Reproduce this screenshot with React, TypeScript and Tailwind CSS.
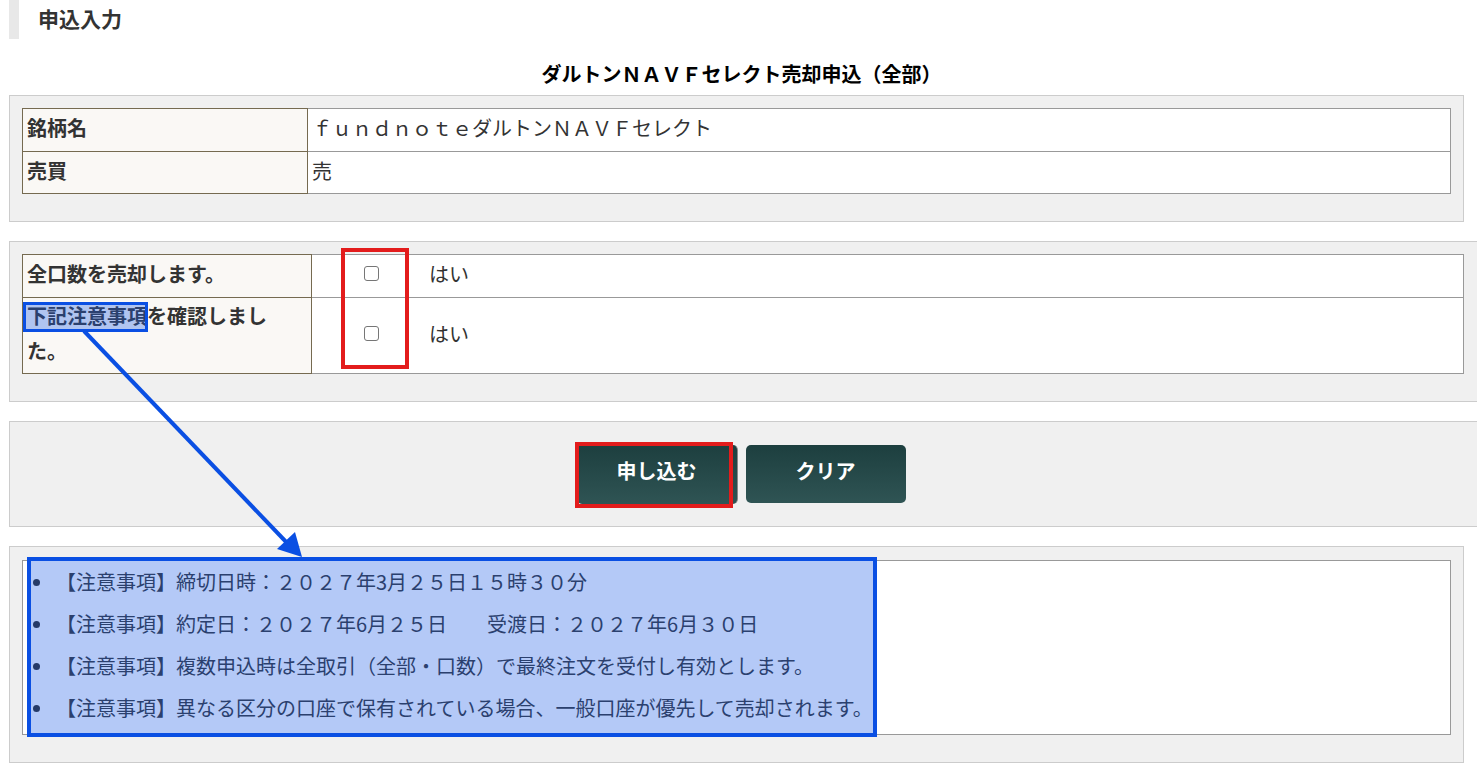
import React from 'react';

const notes = [
  '【注意事項】締切日時：２０２７年3月２５日１５時３０分',
  '【注意事項】約定日：２０２７年6月２５日　　受渡日：２０２７年6月３０日',
  '【注意事項】複数申込時は全取引（全部・口数）で最終注文を受付し有効とします。',
  '【注意事項】異なる区分の口座で保有されている場合、一般口座が優先して売却されます。',
];

function Checkbox() {
  return (
    <input
      type="checkbox"
      className="appearance-none w-[15px] h-[15px] rounded-[3px] border-[1.5px] border-[#767676] bg-white"
    />
  );
}

export default function App() {
  return (
    <div className="relative w-[1477px] h-[778px] overflow-hidden bg-white text-[#333] font-['Noto_Sans_CJK_JP',sans-serif] text-[20px]">
      {/* heading */}
      <div className="h-[39px] flex items-center">
        <div className="ml-[9px] w-[10px] h-[39px] bg-[#e8e8e8]" />
        <h1 className="ml-[19px] mb-[3px] text-[21px] font-bold leading-none text-[#333]">申込入力</h1>
      </div>

      <h2 className="mt-[17px] h-[39px] pl-[6px] text-center font-bold text-black leading-[35px]">
        ダルトンＮＡＶＦセレクト売却申込（全部）
      </h2>

      {/* fund */}
      <div className="ml-[9px] mr-[13px] border border-[#ccc] bg-[#f0f0f0] pt-[12px] pb-[27px] px-[12px]">
        <table className="w-full border-collapse bg-white">
          <tbody>
            <tr className="h-[43px]">
              <th className="w-[285px] border border-[#756a50] bg-[#faf8f5] px-[4px] pb-[5px] text-left font-bold leading-[35px]">銘柄名</th>
              <td className="border border-[#999] px-[4px] pb-[5px] leading-[35px]">ｆｕｎｄｎｏｔｅダルトンＮＡＶＦセレクト</td>
            </tr>
            <tr className="h-[42px]">
              <th className="border border-[#756a50] bg-[#faf8f5] px-[4px] pb-[5px] text-left font-bold leading-[35px]">売買</th>
              <td className="border border-[#999] px-[4px] pb-[5px] leading-[35px]">売</td>
            </tr>
          </tbody>
        </table>
      </div>

      {/* confirm */}
      <div className="mt-[19px] ml-[9px] mr-[-12px] border border-[#ccc] bg-[#f0f0f0] pt-[12px] pb-[27px] pl-[12px] pr-[24px]">
        <table className="w-full border-collapse bg-white">
          <tbody>
            <tr className="h-[43px]">
              <th className="w-[289px] border border-[#756a50] bg-[#faf8f5] px-[4px] pb-[5px] text-left font-bold leading-[35px]">全口数を売却します。</th>
              <td className="border border-[#999] px-0 pb-[5px]">
                <div className="flex items-center pl-[52px]">
                  <Checkbox />
                  <span className="ml-[50px] leading-[35px]">はい</span>
                </div>
              </td>
            </tr>
            <tr className="h-[76px]">
              <th className="border border-[#756a50] bg-[#faf8f5] px-[4px] pt-0 pb-[5px] text-left font-bold leading-[35px]">
                下記注意事項を確認しまし<br />た。
              </th>
              <td className="border border-[#999] px-0 pb-[5px]">
                <div className="flex items-center pl-[52px]">
                  <Checkbox />
                  <span className="ml-[50px] leading-[35px]">はい</span>
                </div>
              </td>
            </tr>
          </tbody>
        </table>
      </div>

      {/* buttons */}
      <div className="mt-[19px] ml-[9px] mr-[-12px] h-[106px] border border-[#ccc] bg-[#f0f0f0] flex items-center justify-center gap-[8px] pr-[16px]">
        <button className="w-[161px] h-[59px] pb-[6px] rounded-[5px] bg-gradient-to-b from-[#1d3f3f] to-[#2f5454] text-white font-bold border-r border-[#888]">
          申し込む
        </button>
        <button className="w-[160px] h-[58px] pb-[6px] rounded-[5px] bg-gradient-to-b from-[#1d3f3f] to-[#2f5454] text-white font-bold">
          クリア
        </button>
      </div>

      {/* notes */}
      <div className="mt-[19px] ml-[9px] mr-[13px] h-[217px] border border-[#ccc] bg-[#f0f0f0] pt-[13px] px-[12px]">
        <div className="border border-[#999] bg-white pb-[5px]">
          <ul>
            {notes.map((n, i) => (
              <li key={i} className="flex items-center h-[42px]">
                <span className="ml-[10px] w-[7px] h-[7px] rounded-full bg-[#2b2b2b]" />
                <span className="ml-[16px] whitespace-pre leading-[42px]">{n}</span>
              </li>
            ))}
          </ul>
        </div>
      </div>

      {/* annotations */}
      <div className="absolute left-[341px] top-[248px] w-[68px] h-[121px] border-4 border-[#e31c1c]" />
      <div className="absolute left-[575px] top-[442px] w-[158px] h-[66px] border-4 border-[#e31c1c]" />
      <div className="absolute left-[23px] top-[302px] w-[125px] h-[30px] border-[3px] border-[#0a4fe3] bg-[#1a5ce8]/[0.33]" />
      <div className="absolute left-[27px] top-[557px] w-[850px] h-[180px] border-4 border-[#0a4fe3] bg-[#1a5ce8]/[0.33]" />
      <svg className="absolute left-0 top-0 pointer-events-none" width="1477" height="778">
        <line x1="84" y1="331" x2="290" y2="546" stroke="#0a4fe3" strokeWidth="4" />
        <polygon points="302,557 277,549 295,532" fill="#0a4fe3" />
      </svg>
    </div>
  );
}
